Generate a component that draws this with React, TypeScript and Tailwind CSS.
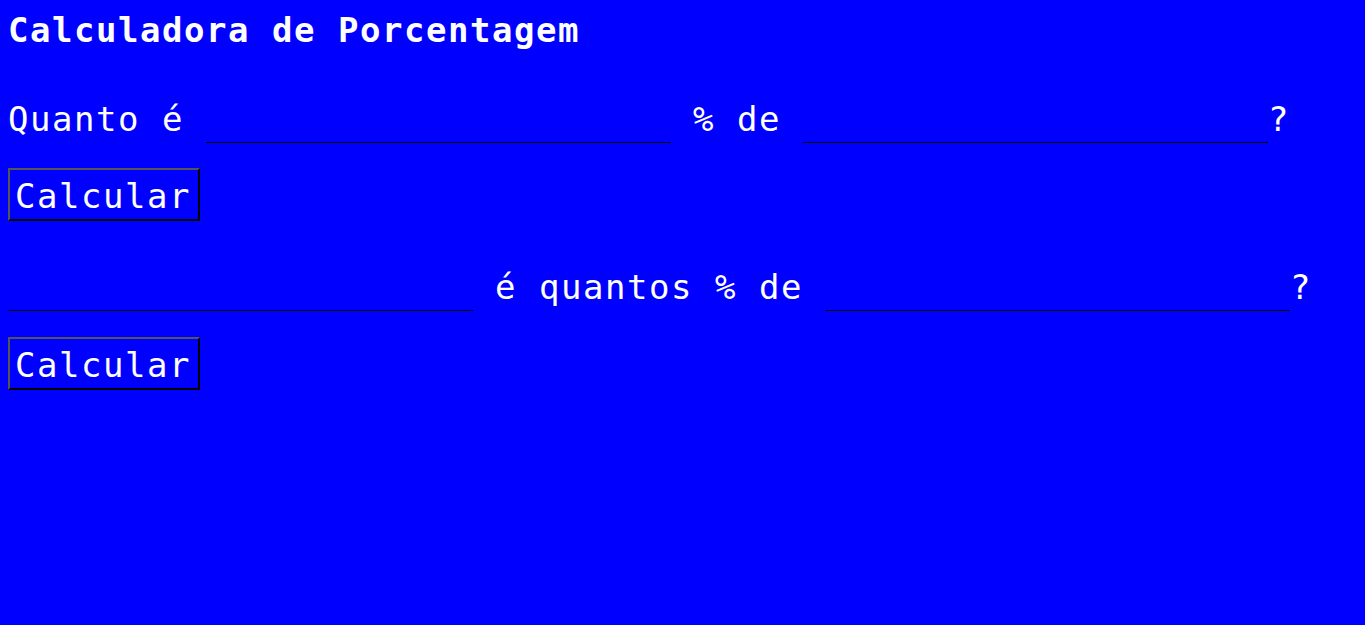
import React from 'react';

const Field: React.FC<{ className?: string }> = ({ className = '' }) => (
  <input
    type="text"
    className={`w-[465px] h-[43px] pt-0 pb-[4px] px-0 border-0 border-b border-black bg-transparent text-white outline-none align-baseline ${className}`}
  />
);

const CalcButton: React.FC = () => (
  <button
    type="button"
    className="block pt-[7px] pb-[4px] pl-[5px] pr-[7px] leading-[38px] border-2 border-t-[#555] border-l-[#555] border-r-black border-b-black bg-[#0000ff] text-white"
  >
    Calcular
  </button>
);

export default function App() {
  return (
    <div className="min-h-screen bg-[#0000ff] text-white font-['DejaVu_Sans_Mono',monospace] text-[34px] tracking-[1.53px] leading-[38px] px-2">
      {/* Title */}
      <h1 className="pt-[11px] font-bold">Calculadora de Porcentagem</h1>

      {/* Quanto é X % de Y? */}
      <div className="mt-[51px] whitespace-nowrap">
        Quanto é{' '}
        <Field />
        {' '}% de{' '}
        <Field />
        ?
      </div>
      <div className="mt-[25px]">
        <CalcButton />
      </div>

      {/* X é quantos % de Y? */}
      <div className="mt-[47px] whitespace-nowrap">
        <Field />
        {' '}é quantos % de{' '}
        <Field />
        ?
      </div>
      <div className="mt-[26px]">
        <CalcButton />
      </div>
    </div>
  );
}
